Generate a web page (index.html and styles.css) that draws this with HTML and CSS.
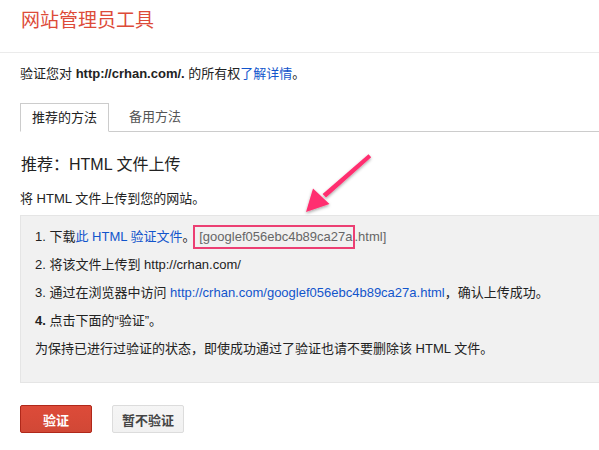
FILE: index.html
```html
<!DOCTYPE html>
<html lang="zh-CN">
<head>
<meta charset="utf-8">
<title>网站管理员工具</title>
<link rel="stylesheet" href="styles.css">
</head>
<body>
<header class="top">
  <h1 class="brand">网站管理员工具</h1>
</header>
<main class="main">
  <p class="intro">验证您对 <b>http://crhan.com/.</b> 的所有权<a class="link" href="#">了解详情</a>。</p>
  <nav class="tabs">
    <span class="tab active">推荐的方法</span>
    <span class="tab">备用方法</span>
    <span class="tab-fill"></span>
  </nav>
  <h2 class="method">推荐：HTML 文件上传</h2>
  <p class="lead">将 HTML 文件上传到您的网站。</p>
  <div class="steps">
    <p class="step">1. 下载<a class="link" href="#">此 HTML 验证文件</a>。 <span class="fname"><span class="mark">[googlef056ebc4b89ca27a</span>.html]</span></p>
    <p class="step">2. 将该文件上传到 http://crhan.com/</p>
    <p class="step">3. 通过在浏览器中访问 <a class="link" href="#">http://crhan.com/googlef056ebc4b89ca27a.html</a>，确认上传成功。</p>
    <p class="step"><b>4.</b> 点击下面的“验证”。</p>
    <p class="step">为保持已进行过验证的状态，即使成功通过了验证也请不要删除该 HTML 文件。</p>
  </div>
  <div class="actions">
    <button class="btn btn-primary">验证</button>
    <button class="btn btn-plain">暂不验证</button>
  </div>
</main>
<svg class="arrow" width="90" height="80" viewBox="0 0 90 80">
  <defs>
    <filter id="sh" x="-30%" y="-30%" width="160%" height="160%">
      <feDropShadow dx="0" dy="1.5" stdDeviation="1.5" flood-color="#000" flood-opacity="0.35"/>
    </filter>
  </defs>
  <g filter="url(#sh)" fill="#ff2f6f">
    <path d="M68.5 4.2 L71.2 7.2 L26 47.5 L22.6 44 Z"/>
    <path d="M6 62 L13 38.5 L29.5 54 Z"/>
  </g>
</svg>
</body>
</html>
```
FILE: styles.css
```css
html { overflow: hidden; }
body {
  margin: 0;
  font-family: "Liberation Sans", Arial, "Noto Sans CJK SC", sans-serif;
  font-size: 13px;
  color: #222;
  background: #fff;
  position: relative;
  width: 599px;
  height: 450px;
  overflow: hidden;
}
.top {
  height: 53px;
  border-bottom: 1px solid #ebebeb;
  box-sizing: border-box;
  padding: 9px 0 0 21px;
}
.brand {
  margin: 0;
  font-weight: normal;
  font-size: 19px;
  line-height: 24px;
  color: #dd4b39;
}
.main {
  padding: 0 0 0 20px;
}
.intro {
  margin: 0;
  padding-top: 12px;
  line-height: 18px;
}
.link {
  color: #15c;
  text-decoration: none;
}
.tabs {
  display: flex;
  margin-top: 20px;
  height: 29px;
}
.tab {
  box-sizing: border-box;
  height: 29px;
  line-height: 27px;
  padding: 0 20px 0 20px;
  color: #555;
  border-bottom: 1px solid #ccc;
}
.tab.active {
  width: 89px;
  padding: 0;
  text-align: center;
  color: #222;
  border: 1px solid #ccc;
  border-bottom: 1px solid transparent;
}
.tab-fill {
  flex: 1;
  border-bottom: 1px solid #ccc;
}
.method {
  margin: 0;
  padding-top: 22px;
  font-size: 16px;
  font-weight: normal;
  line-height: 22px;
  padding-left: 1px;
}
.lead {
  margin: 0;
  padding-top: 14px;
  line-height: 18px;
}
.steps {
  margin-top: 7px;
  width: 579px;
  box-sizing: border-box;
  background: #f1f1f1;
  border: 1px solid #e5e5e5;
  border-right: none;
  height: 168px;
  padding: 7px 0 0 14px;
}
.step {
  margin: 0;
  line-height: 28px;
  height: 28px;
  white-space: nowrap;
}
.fname {
  color: #666;
}
.mark {
  display: inline-block;
  border: 2px solid #ec3f73;
  line-height: 20px;
  height: 20px;
  padding: 0 0 0 4px;
  margin-left: -6px;
  vertical-align: middle;
  position: relative;
  top: -1px;
}
.actions {
  display: flex;
  gap: 20px;
  margin-top: 22px;
}
.btn {
  width: 72px;
  height: 28px;
  font-family: inherit;
  font-size: 13px;
  font-weight: bold;
  border-radius: 2px;
  padding: 0;
  cursor: pointer;
}
.btn-primary {
  background: #d14836;
  background-image: linear-gradient(#dd4b39, #d14836);
  border: 1px solid #b0281a;
  color: #fff;
}
.btn-plain {
  background: #f5f5f5;
  background-image: linear-gradient(#f5f5f5, #f1f1f1);
  border: 1px solid #dcdcdc;
  color: #444;
}
.arrow {
  position: absolute;
  left: 300px;
  top: 150px;
}
```
